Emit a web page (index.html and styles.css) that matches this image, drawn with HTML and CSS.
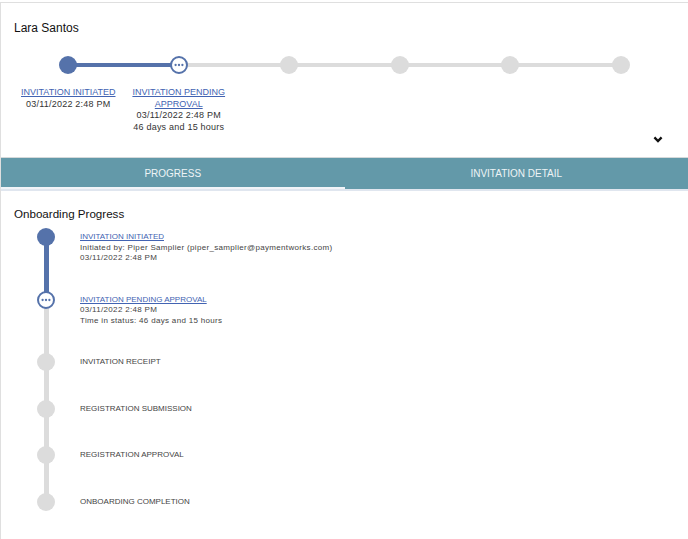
FILE: index.html
```
<!DOCTYPE html>
<html lang="en">
<head>
<meta charset="utf-8">
<title>Lara Santos – Onboarding</title>
<link rel="stylesheet" href="styles.css">
</head>
<body>
<div class="card">
  <section class="summary">
    <h1 class="name">Lara Santos</h1>
    <ol class="stepper">
      <li class="step done">
        <span class="dot"></span>
        <div class="step-label">
          <a href="#">INVITATION INITIATED</a>
          <div class="meta">03/11/2022 2:48 PM</div>
        </div>
      </li>
      <li class="step current">
        <span class="dot pending"><svg width="10" height="4" viewBox="0 0 10 4"><circle cx="1.6" cy="2" r="1.15"/><circle cx="5" cy="2" r="1.15"/><circle cx="8.4" cy="2" r="1.15"/></svg></span>
        <div class="step-label">
          <a href="#">INVITATION PENDING APPROVAL</a>
          <div class="meta">03/11/2022 2:48 PM</div>
          <div class="meta">46 days and 15 hours</div>
        </div>
      </li>
      <li class="step"><span class="dot"></span></li>
      <li class="step"><span class="dot"></span></li>
      <li class="step"><span class="dot"></span></li>
      <li class="step"><span class="dot"></span></li>
    </ol>
    <div class="toggle-row">
      <svg class="chevron" width="10" height="7" viewBox="0 0 10 7"><polyline points="1.4,1.4 5,5 8.6,1.4"/></svg>
    </div>
  </section>

  <nav class="tabs">
    <div class="tab active">PROGRESS</div>
    <div class="tab">INVITATION DETAIL</div>
  </nav>

  <section class="progress">
    <h2 class="section-title">Onboarding Progress</h2>
    <ol class="timeline">
      <li class="tl-item done tall">
        <span class="tl-dot"></span>
        <div class="tl-body">
          <a href="#">INVITATION INITIATED</a>
          <div class="meta">Initiated by: Piper Samplier (piper_samplier@paymentworks.com)</div>
          <div class="meta">03/11/2022 2:48 PM</div>
        </div>
      </li>
      <li class="tl-item tall">
        <span class="tl-dot pending"><svg width="10" height="4" viewBox="0 0 10 4"><circle cx="1.6" cy="2" r="1.15"/><circle cx="5" cy="2" r="1.15"/><circle cx="8.4" cy="2" r="1.15"/></svg></span>
        <div class="tl-body">
          <a href="#">INVITATION PENDING APPROVAL</a>
          <div class="meta">03/11/2022 2:48 PM</div>
          <div class="meta">Time in status: 46 days and 15 hours</div>
        </div>
      </li>
      <li class="tl-item">
        <span class="tl-dot"></span>
        <div class="tl-body">INVITATION RECEIPT</div>
      </li>
      <li class="tl-item">
        <span class="tl-dot"></span>
        <div class="tl-body">REGISTRATION SUBMISSION</div>
      </li>
      <li class="tl-item">
        <span class="tl-dot"></span>
        <div class="tl-body">REGISTRATION APPROVAL</div>
      </li>
      <li class="tl-item">
        <span class="tl-dot"></span>
        <div class="tl-body">ONBOARDING COMPLETION</div>
      </li>
    </ol>
  </section>
</div>
</body>
</html>
```

FILE: styles.css
```
* { box-sizing: border-box; }

body {
  margin: 0;
  background: #ffffff;
  font-family: "Liberation Sans", Arial, Helvetica, sans-serif;
  color: #333;
}

.card {
  margin-top: 2px;
  min-height: 537px;
  border-top: 1px solid #dfdfdf;
  border-left: 1px solid #dfdfdf;
}

/* ---------- summary header ---------- */
.summary {
  padding: 18px 12px 0;
}

.name {
  margin: 0;
  padding-left: 1px;
  font-size: 12px;
  line-height: 14px;
  font-weight: normal;
  color: #111;
}

.stepper {
  list-style: none;
  margin: 21px 0 0;
  padding: 0;
  display: flex;
}

.step {
  flex: 1;
  position: relative;
  display: flex;
  flex-direction: column;
  align-items: center;
}

.step:not(:last-child)::before {
  content: "";
  position: absolute;
  top: 7px;
  left: 50%;
  width: 100%;
  height: 4px;
  background: #dcdcdc;
}

.step.done::before { background: #5572aa; }

.dot {
  position: relative;
  z-index: 1;
  width: 18px;
  height: 18px;
  border-radius: 50%;
  background: #dcdcdc;
}

.step.done .dot { background: #5572aa; }

.dot.pending,
.tl-dot.pending {
  background: #fff;
  border: 2px solid #5572aa;
  display: flex;
  align-items: center;
  justify-content: center;
}

.pending svg { fill: #5572aa; display: block; }

.step-label {
  margin-top: 13px;
  text-align: center;
  font-size: 9px;
  line-height: 11.5px;
  color: #333;
}

.step-label a,
.tl-body a {
  color: #4263b2;
  text-decoration: underline;
}

.step-label .meta { letter-spacing: 0.22px; }

.toggle-row {
  height: 24px;
  padding: 3px 13px 0 0;
  display: flex;
  justify-content: flex-end;
  align-items: flex-start;
}

.chevron {
  display: block;
  fill: none;
  stroke: #111;
  stroke-width: 2.3;
}

/* ---------- tabs ---------- */
.tabs {
  display: flex;
  border-top: 1px solid #d5d9da;
  border-bottom: 2px solid #e0e6ef;
}

.tab {
  flex: 1;
  height: 31px;
  display: flex;
  align-items: center;
  justify-content: center;
  background: #6399a9;
  color: #eef4f6;
  font-size: 10px;
}

.tab.active {
  box-shadow: inset 0 -2px 0 #f1f4f8;
}

/* ---------- progress timeline ---------- */
.progress {
  padding: 16px 13px 0;
}

.section-title {
  margin: 0;
  font-size: 11.6px;
  line-height: 14px;
  font-weight: normal;
  color: #111;
}

.timeline {
  list-style: none;
  margin: 7px 0 0;
  padding: 0;
}

.tl-item {
  position: relative;
  display: flex;
  gap: 25px;
  padding-left: 23px;
  height: 46.5px;
}

.tl-item.tall { height: 62.5px; }

.tl-item:not(:last-child)::before {
  content: "";
  position: absolute;
  left: 29.5px;
  top: 9px;
  width: 5px;
  height: 100%;
  background: #dcdcdc;
}

.tl-item.done::before { background: #5572aa; }

.tl-dot {
  position: relative;
  z-index: 1;
  flex-shrink: 0;
  width: 18px;
  height: 18px;
  border-radius: 50%;
  background: #dcdcdc;
}

.tl-item.done .tl-dot { background: #5572aa; }

.tl-body {
  padding-top: 4px;
  font-size: 8px;
  line-height: 10.5px;
  color: #444;
}

.tl-body .meta { letter-spacing: 0.32px; }
```
